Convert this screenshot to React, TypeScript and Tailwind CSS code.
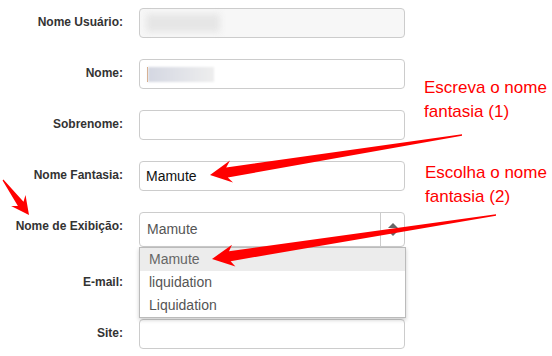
import type { ReactNode } from 'react';

function Row({ label, children, tall }: { label: string; children: ReactNode; tall?: boolean }) {
  return (
    <div className={`flex items-start gap-4 ${tall ? 'h-[35px]' : 'h-[30px]'}`}>
      <label className="w-[123px] shrink-0 pt-[7px] text-right text-[12px] leading-[15px] font-bold text-[#333]">
        {label}
      </label>
      <div className="relative w-[266px] h-full">{children}</div>
    </div>
  );
}

function Field({ className = '', children }: { className?: string; children?: ReactNode }) {
  return (
    <div className={`flex h-full items-center rounded-[4px] border border-[#ccc] px-[6px] text-[14px] ${className}`}>
      {children}
    </div>
  );
}

function Arrows() {
  return (
    <svg className="pointer-events-none absolute inset-0 z-20" width="552" height="356" viewBox="0 0 552 356">
      <polygon
        fill="#ff0000"
        points="210,175 230,160.5 226.2,167.5 462,134.3 462,135.7 227.8,177.5 233,182.5"
      />
      <polygon
        fill="#ff0000"
        points="212,259 232,244.7 229,251.2 496,214.3 496,215.7 230.6,261.2 235.4,266.5"
      />
      <polygon
        fill="#ff0000"
        points="29,215 25.5,195.1 23.5,201.7 3.4,179.6 2.6,180.4 17.9,205.9 11.1,205.9"
      />
    </svg>
  );
}

export default function App() {
  return (
    <main className="relative h-[356px] w-[552px] overflow-hidden bg-white font-['Liberation_Sans',Arial,sans-serif]">
      <form className="flex flex-col gap-[21px] pt-[8px]">
        <Row label="Nome Usuário:">
          <Field className="bg-[#f7f7f7]">
            <div className="h-[18px] w-[74px] bg-[#e6e6e6] blur-[3px]" />
          </Field>
        </Row>
        <Row label="Nome:">
          <Field className="bg-white px-[7px]">
            <div className="h-[15px] w-px bg-[#d9a070]" />
            <div className="h-[15px] w-[66px] bg-gradient-to-r from-[#d4d7e2] to-[#eeeeee] blur-[1px]" />
          </Field>
        </Row>
        <Row label="Sobrenome:">
          <Field className="bg-white" />
        </Row>
        <Row label="Nome Fantasia:">
          <Field className="bg-white text-[#111]">Mamute</Field>
        </Row>
        <Row label="Nome de Exibição:" tall>
          <div className="flex h-full rounded-[4px] border border-[#ccc] bg-white text-[14px] text-[#555]">
            <div className="flex flex-1 items-center px-[7px]">Mamute</div>
            <div className="flex w-[24px] flex-col items-center justify-center border-l border-[#ccc]">
              <svg width="10" height="13" viewBox="0 0 10 13">
                <polygon points="5,0 10,5 0,5" fill="#666" />
                <polygon points="0,8 10,8 5,13" fill="#666" />
              </svg>
            </div>
          </div>
          <ul className="absolute left-0 top-full z-10 w-[267px] border border-[#bbb] bg-white text-[14px] leading-[23px] text-[#555] shadow-[0_2px_4px_rgba(0,0,0,0.2)]">
            <li className="bg-[#ececec] px-[9px] text-[#666]">Mamute</li>
            <li className="px-[9px]">liquidation</li>
            <li className="px-[9px]">Liquidation</li>
          </ul>
        </Row>
        <Row label="E-mail:">
          <Field className="bg-white" />
        </Row>
        <Row label="Site:">
          <Field className="bg-white" />
        </Row>
      </form>

      <p className="absolute left-[424px] top-[76px] text-[17px] leading-[24px] text-[#ff0000]">
        Escreva o nome
        <br />
        fantasia (1)
      </p>
      <p className="absolute left-[425px] top-[161px] text-[17px] leading-[24px] text-[#ff0000]">
        Escolha o nome
        <br />
        fantasia (2)
      </p>

      <Arrows />
    </main>
  );
}
